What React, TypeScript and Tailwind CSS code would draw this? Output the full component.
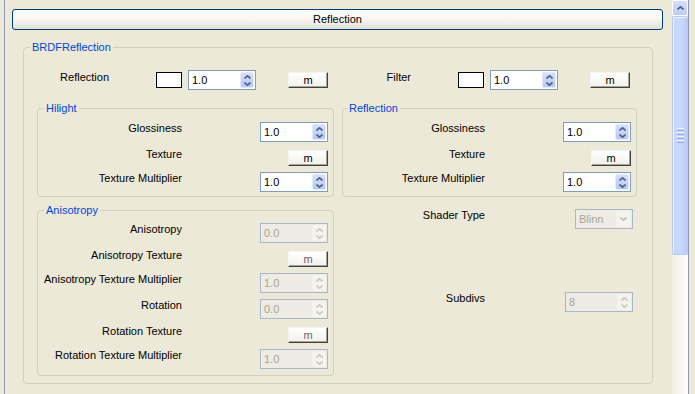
import React from 'react';

function Chevron({ dir, color }: { dir: 'up' | 'down'; color: string }) {
  return (
    <svg width="7" height="4" viewBox="0 0 7 4" className="block">
      <path
        d={dir === 'up' ? 'M0.5 3.5 L3.5 0.8 L6.5 3.5' : 'M0.5 0.5 L3.5 3.2 L6.5 0.5'}
        fill="none"
        stroke={color}
        strokeWidth="1.6"
      />
    </svg>
  );
}

function Spinner({ value, disabled = false }: { value: string; disabled?: boolean }) {
  return (
    <div
      className={`flex h-[20px] w-[68px] shrink-0 border ${
        disabled ? 'border-[#a9b7c9] bg-[#edebe3]' : 'border-[#7f9db9] bg-white'
      }`}
    >
      <span className={`flex-1 pl-[3px] text-[11px] leading-[18px] ${disabled ? 'text-[#a7a596]' : 'text-black'}`}>
        {value}
      </span>
      <div className="p-[1px]">
        <div
          className={`flex h-full w-[14px] flex-col items-center justify-center gap-[3px] rounded-[2px] ${
            disabled ? 'bg-[#f4f3ee]' : 'border border-[#e4ebfd] bg-gradient-to-b from-[#d5e0fc] to-[#b4c7f5]'
          }`}
        >
          <Chevron dir="up" color={disabled ? '#cbc9bd' : '#4d6185'} />
          <Chevron dir="down" color={disabled ? '#cbc9bd' : '#4d6185'} />
        </div>
      </div>
    </div>
  );
}

function Dropdown({ value }: { value: string }) {
  return (
    <div className="flex h-[20px] w-[58px] shrink-0 border border-[#a9b7c9] bg-[#edebe3]">
      <span className="flex-1 pl-[3px] text-[11px] leading-[18px] text-[#a7a596]">{value}</span>
      <div className="p-[1px]">
        <div className="flex h-full w-[15px] items-center justify-center rounded-[2px] bg-[#f4f3ee]">
          <Chevron dir="down" color="#c3c1b5" />
        </div>
      </div>
    </div>
  );
}

function MButton({ dim = false }: { dim?: boolean }) {
  return (
    <div
      className={`flex h-[16px] w-[40px] shrink-0 items-center justify-center border border-t-[#f4f4f4] border-l-[#f4f4f4] border-r-[#404040] border-b-[#404040] bg-gradient-to-b from-white to-[#f2f1ea] shadow-[inset_-1px_-1px_0_#a6a49a] text-[11px] leading-[13px] ${
        dim ? 'text-[#666]' : 'text-black'
      }`}
    >
      m
    </div>
  );
}

function Swatch() {
  return <div className="h-[16px] w-[26px] shrink-0 border border-black bg-white" />;
}

function Group({
  title,
  className,
  legendClass = 'ml-[6px]',
  children,
}: {
  title: string;
  className: string;
  legendClass?: string;
  children: React.ReactNode;
}) {
  return (
    <fieldset className={`rounded-[4px] border border-[#d0d0bf] ${className}`}>
      <legend className={`${legendClass} px-[2px] text-[11px] leading-[13px] text-[#0046d5]`}>{title}</legend>
      {children}
    </fieldset>
  );
}

function Row({
  label,
  labelW,
  className = '',
  children,
}: {
  label: string;
  labelW: string;
  className?: string;
  children: React.ReactNode;
}) {
  return (
    <div className={`flex h-[20px] ${className}`}>
      <div className={`${labelW} shrink-0 text-right text-[11px] leading-[13px] text-black`}>{label}</div>
      <div className="flex flex-1 items-center justify-end">{children}</div>
    </div>
  );
}

function ColorRow({ label }: { label: string }) {
  return (
    <div className="flex h-[20px] w-[302px]">
      <div className="w-[72px] shrink-0 pt-[1px] text-right text-[11px] leading-[13px]">{label}</div>
      <div className="ml-[47px] flex items-center">
        <Swatch />
        <div className="ml-[6px]">
          <Spinner value="1.0" />
        </div>
        <div className="ml-[32px]">
          <MButton />
        </div>
      </div>
    </div>
  );
}

function ScrollBar() {
  return (
    <div className="flex w-[16px] shrink-0 flex-col">
      <div className="flex h-[16px] items-center justify-center rounded-[2px] border border-white bg-gradient-to-b from-[#d2defc] to-[#bccdf8]">
        <Chevron dir="up" color="#4d6185" />
      </div>
      <div className="flex h-[239px] flex-col items-center justify-center gap-[1px] rounded-[2px] border border-[#b6c9f5] bg-gradient-to-r from-[#c6d5fb] via-[#cbd9fc] to-[#b9cbf7] shadow-[inset_1px_1px_0_#eef3fe]">
        <div className="h-[1px] w-[7px] bg-[#eef3fe]" />
        <div className="h-[1px] w-[7px] bg-[#8faaf0]" />
        <div className="h-[1px] w-[7px] bg-[#eef3fe]" />
        <div className="h-[1px] w-[7px] bg-[#8faaf0]" />
        <div className="h-[1px] w-[7px] bg-[#eef3fe]" />
        <div className="h-[1px] w-[7px] bg-[#8faaf0]" />
        <div className="h-[1px] w-[7px] bg-[#eef3fe]" />
        <div className="h-[1px] w-[7px] bg-[#8faaf0]" />
      </div>
      <div className="flex-1 bg-gradient-to-r from-[#f1efe6] to-[#fefefb]" />
    </div>
  );
}

export default function App() {
  return (
    <div className="flex h-[394px] w-[695px] overflow-hidden bg-[#ece9d8] font-['Liberation_Sans',Arial,sans-serif] text-[11px] text-black">
      <div className="ml-[4px] flex h-full w-[685px] border-x border-[#8c9db5]">
        <div className="flex-1 pl-[7px] pt-[9px]">
          <div className="flex h-[21px] w-[651px] items-center justify-center rounded-[3px] border border-[#003c74] bg-gradient-to-b from-white via-[#f6f5f0] to-[#e3e1d6] text-[11px]">
            Reflection
          </div>

          <Group title="BRDFReflection" className="ml-[11px] mt-[11px] w-[630px] pb-[7px]">
            <div className="mt-[16px] flex pl-[13px]">
              <ColorRow label="Reflection" />
              <ColorRow label="Filter" />
            </div>

            <div className="mt-[12px] flex gap-[8px] pl-[13px]">
              <div className="flex w-[297px] flex-col">
                <Group title="Hilight" className="w-[297px] pb-[4px] pr-[5px]">
                  <div className="mt-[7px] flex flex-col">
                    <Row label="Glossiness" labelW="w-[144px]">
                      <Spinner value="1.0" />
                    </Row>
                    <Row label="Texture" labelW="w-[144px]" className="mt-[6px]">
                      <MButton />
                    </Row>
                    <Row label="Texture Multiplier" labelW="w-[144px]" className="mt-[4px]">
                      <Spinner value="1.0" />
                    </Row>
                  </div>
                </Group>

                <Group title="Anisotropy" className="mt-[7px] w-[297px] pb-[6px] pr-[5px]">
                  <div className="mt-[6px] flex flex-col">
                    <Row label="Anisotropy" labelW="w-[144px]">
                      <Spinner value="0.0" disabled />
                    </Row>
                    <Row label="Anisotropy Texture" labelW="w-[144px]" className="mt-[6px]">
                      <MButton dim />
                    </Row>
                    <Row label="Anisotropy Texture Multiplier" labelW="w-[144px]" className="mt-[4px]">
                      <Spinner value="1.0" disabled />
                    </Row>
                    <Row label="Rotation" labelW="w-[144px]" className="mt-[6px]">
                      <Spinner value="0.0" disabled />
                    </Row>
                    <Row label="Rotation Texture" labelW="w-[144px]" className="mt-[6px]">
                      <MButton dim />
                    </Row>
                    <Row label="Rotation Texture Multiplier" labelW="w-[144px]" className="mt-[4px]">
                      <Spinner value="1.0" disabled />
                    </Row>
                  </div>
                </Group>
              </div>

              <div className="flex w-[295px] flex-col">
                <Group title="Reflection" legendClass="ml-[4px]" className="w-[295px] pb-[4px] pr-[5px]">
                  <div className="mt-[7px] flex flex-col">
                    <Row label="Glossiness" labelW="w-[142px]">
                      <Spinner value="1.0" />
                    </Row>
                    <Row label="Texture" labelW="w-[142px]" className="mt-[6px]">
                      <MButton />
                    </Row>
                    <Row label="Texture Multiplier" labelW="w-[142px]" className="mt-[4px]">
                      <Spinner value="1.0" />
                    </Row>
                  </div>
                </Group>

                <div className="mt-[12px] pr-[4px]">
                  <Row label="Shader Type" labelW="w-[143px]">
                    <Dropdown value="Blinn" />
                  </Row>
                </div>
                <div className="mt-[63px] pr-[4px]">
                  <Row label="Subdivs" labelW="w-[143px]">
                    <Spinner value="8" disabled />
                  </Row>
                </div>
              </div>
            </div>
          </Group>
        </div>
        <ScrollBar />
      </div>
    </div>
  );
}
